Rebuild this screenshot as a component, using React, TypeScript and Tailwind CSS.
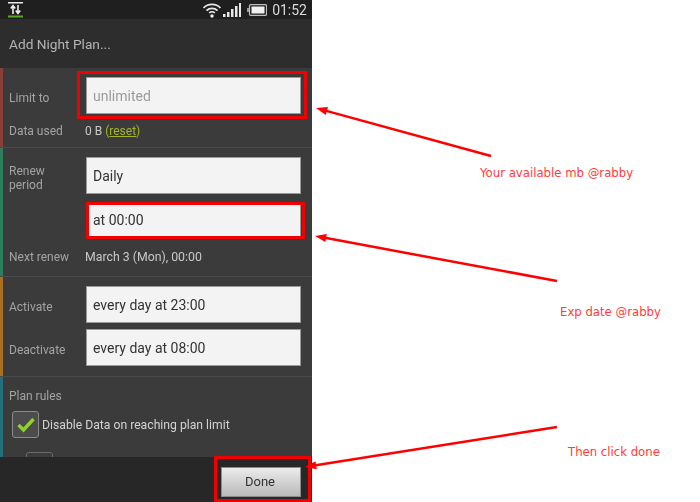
import type { ReactNode } from "react"

function Field({ children, muted, short }: { children: ReactNode; muted?: boolean; short?: boolean }) {
  return (
    <div
      className={`flex w-[215px] items-center border border-[#9a9a9a] bg-[#f3f3f3] pl-[6px] text-[14px] ${
        short ? "h-[36px]" : "h-[37px] pt-[1px]"
      } ${muted ? "text-[#9b9b9b]" : "text-[#333333]"}`}
    >
      {children}
    </div>
  )
}

function Row({ label, children, className, low }: { label: ReactNode; children: ReactNode; className?: string; low?: boolean }) {
  return (
    <div className={`flex items-center ${className ?? ""}`}>
      <div className={`w-[83px] pl-[6px] text-[12px] leading-[14px] text-[#a3a3a3] ${low ? "pt-[5px]" : ""}`}>{label}</div>
      {children}
    </div>
  )
}

function Section({ bar, height, children }: { bar: string; height: string; children: ReactNode }) {
  return (
    <div className={`flex border-b border-[#4a4a4a] ${height}`}>
      <div className={`w-[3px] shrink-0 ${bar}`} />
      <div className="flex-1 overflow-hidden">{children}</div>
    </div>
  )
}

function StatusBar() {
  return (
    <div className="flex h-[19px] items-center justify-between bg-[#1f1f1f] pl-[8px] pr-[5px]">
      <svg width="16" height="17" viewBox="0 0 16 17">
        <rect x="0" y="1" width="15" height="1.5" fill="#e8e8e8" />
        <path d="M5 13V6M2.8 7.5 5 4.5l2.2 3M10 4v7M7.8 9.5 10 12.5l2.2-3" fill="none" stroke="#f0f0f0" strokeWidth="1.6" />
        <rect x="0" y="14.5" width="15" height="2" fill="#5aa82a" />
      </svg>
      <div className="flex items-center">
        <svg width="20" height="16" viewBox="0 0 20 16">
          <path d="M1.5 6C6 1.2 14 1.2 18.5 6M4.5 8.6c3-3 8-3 11 0M7.2 11c1.5-1.4 4.1-1.4 5.6 0" fill="none" stroke="#e8e8e8" strokeWidth="1.7" />
          <circle cx="10" cy="14" r="1.7" fill="#f0f0f0" />
        </svg>
        <svg className="ml-[1px]" width="18" height="14" viewBox="0 0 18 14">
          <path d="M0 11h2.5v3H0zM4 9h2.5v5H4zM8 6h2.5v8H8zM12 3h2.5v11H12zM16 0h2v14h-2z" fill="#e8e8e8" />
        </svg>
        <svg className="ml-[6px]" width="20" height="12" viewBox="0 0 20 12">
          <rect x="2.5" y="0.7" width="17" height="10.6" rx="1" fill="none" stroke="#bdbdbd" strokeWidth="1.2" />
          <rect x="4.5" y="2.5" width="13" height="7" fill="#f0f0f0" />
          <rect x="0" y="4" width="2" height="4" fill="#9a9a9a" />
        </svg>
        <span className="ml-[5px] text-[14px] leading-none text-[#dadada]">01:52</span>
      </div>
    </div>
  )
}

function Phone() {
  return (
    <div className="flex h-full w-[312px] flex-col bg-[#3b3b3b] font-['Roboto',sans-serif] blur-[0.35px]">
      <StatusBar />
      <div className="flex h-[49px] items-center bg-[#2d2d2d] pl-[9px] pt-[2px] text-[13.7px] text-[#b5b5b5]">Add Night Plan...</div>

      <div className="flex-1 overflow-hidden">
        <Section bar="bg-[#8a3e3a]" height="h-[80px]">
          <Row label="Limit to" className="pt-[9px]" low>
            <Field muted>unlimited</Field>
          </Row>
          <Row label="Data used" className="mt-[8px]">
            <span className="-ml-px text-[12px] text-[#c8c8c8]">
              0 B <span className="text-[#a3b52a]">(<span className="underline">reset</span>)</span>
            </span>
          </Row>
        </Section>

        <Section bar="bg-[#2e7d5b]" height="h-[129px]">
          <div className="flex items-start pt-[9px]">
            <div className="w-[83px] pl-[6px] pt-[7px] text-[12px] leading-[14px] text-[#a3a3a3]">
              Renew
              <br />
              period
            </div>
            <Field>Daily</Field>
          </div>
          <div className="mt-[8px] pl-[83px]">
            <Field short>at 00:00</Field>
          </div>
          <Row label="Next renew" className="mt-[10px]">
            <span className="-ml-px text-[12.3px] text-[#c8c8c8]">March 3 (Mon), 00:00</span>
          </Row>
        </Section>

        <Section bar="bg-[#a8701f]" height="h-[100px]">
          <Row label="Activate" className="pt-[9px]" low>
            <Field>every day at 23:00</Field>
          </Row>
          <Row label="Deactivate" className="mt-[6px]" low>
            <Field>every day at 08:00</Field>
          </Row>
        </Section>

        <div className="flex h-[80px]">
          <div className="w-[3px] shrink-0 bg-[#23707a]" />
          <div className="flex-1 pl-[6px] pt-[12px]">
            <div className="text-[12px] leading-[15px] text-[#a3a3a3]">Plan rules</div>
            <div className="mt-[7px] flex items-center">
              <div className="ml-[3px] flex h-[27px] w-[27px] items-center justify-center rounded-[3px] border border-[#8a8a8a] bg-[#4c4c4c]">
                <svg width="20" height="17" viewBox="0 0 20 17">
                  <path d="M2.5 9 7.5 14 17.5 3" fill="none" stroke="#8fd12f" strokeWidth="3.4" />
                </svg>
              </div>
              <span className="ml-[3px] pt-[1px] text-[12.2px] text-[#d2d2d2]">Disable Data on reaching plan limit</span>
            </div>
            <div className="ml-[17px] mt-[14px] h-[27px] w-[27px] rounded-[3px] border border-[#6a6a6a]" />
          </div>
        </div>
      </div>

      <div className="flex h-[45px] items-start justify-end bg-[#272727] pr-[11px] pt-[10px]">
        <button className="h-[30px] w-[80px] border border-[#8c8c8c] bg-gradient-to-b from-[#ececec] to-[#b9b9b9] pr-[2px] text-[13px] text-[#333333]">
          Done
        </button>
      </div>
    </div>
  )
}

// arrows drawn over the screenshot
function Arrow({ x1, y1, x2, y2, w = 2.5 }: { x1: number; y1: number; x2: number; y2: number; w?: number }) {
  const a = Math.atan2(y1 - y2, x1 - x2)
  const len = 12
  const spread = 0.35
  const p1 = `${x2 + len * Math.cos(a + spread)},${y2 + len * Math.sin(a + spread)}`
  const p2 = `${x2 + len * Math.cos(a - spread)},${y2 + len * Math.sin(a - spread)}`
  return (
    <>
      <line x1={x1} y1={y1} x2={x2 + 6 * Math.cos(a)} y2={y2 + 6 * Math.sin(a)} stroke="#ff0000" strokeWidth={w} />
      <polygon points={`${x2},${y2} ${p1} ${p2}`} fill="#ff0000" />
    </>
  )
}

export default function App() {
  return (
    <div className="relative h-[502px] w-[700px] overflow-hidden bg-white">
      <Phone />

      <div className="absolute left-[77px] top-[71px] h-[48px] w-[230px] border-[3px] border-[#f00000]" />
      <div className="absolute left-[86px] top-[202px] h-[37px] w-[219px] border-[3px] border-[#f00000]" />
      <div className="absolute left-[214px] top-[456px] h-[46px] w-[97px] border-[3px] border-[#f00000]" />

      <svg className="absolute left-0 top-0" width="700" height="502" viewBox="0 0 700 502">
        <Arrow x1={491} y1={156} x2={316} y2={108} />
        <Arrow x1={557} y1={281} x2={315} y2={236} />
        <Arrow x1={557} y1={427} x2={305} y2={467} />
      </svg>

      <span className="absolute left-[480px] top-[165px] font-['DejaVu_Sans',sans-serif] text-[11.7px] text-[#ff3b3b]">Your available mb @rabby</span>
      <span className="absolute left-[560px] top-[304px] font-['DejaVu_Sans',sans-serif] text-[11.7px] text-[#ff3b3b]">Exp date @rabby</span>
      <span className="absolute left-[568px] top-[444px] font-['DejaVu_Sans',sans-serif] text-[11.7px] text-[#ff3b3b]">Then click done</span>
    </div>
  )
}
